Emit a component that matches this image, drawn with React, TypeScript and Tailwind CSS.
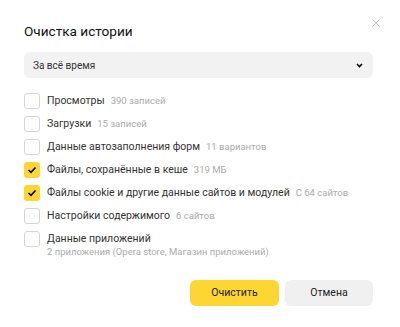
import { useState } from "react"

interface Item {
  label: string
  hint: string
  checked: boolean
  below?: boolean
}

const initialItems: Item[] = [
  { label: "Просмотры", hint: "390 записей", checked: false },
  { label: "Загрузки", hint: "15 записей", checked: false },
  { label: "Данные автозаполнения форм", hint: "11 вариантов", checked: false },
  { label: "Файлы, сохранённые в кеше", hint: "319 МБ", checked: true },
  { label: "Файлы cookie и другие данные сайтов и модулей", hint: "С 64 сайтов", checked: true },
  { label: "Настройки содержимого", hint: "6 сайтов", checked: false },
  { label: "Данные приложений", hint: "2 приложения (Opera store, Магазин приложений)", checked: false, below: true },
]

function Checkbox({ checked }: { checked: boolean }) {
  if (checked) {
    return (
      <span className="w-4 h-4 rounded-[3px] bg-[#fdd633] flex items-center justify-center flex-shrink-0">
        <svg width="10" height="8" viewBox="0 0 10 8" fill="none">
          <path d="M1.5 4 L4 6.3 L8.5 1.5" stroke="#000" strokeWidth="1.6" />
        </svg>
      </span>
    )
  }
  return <span className="w-4 h-4 rounded-[3px] border border-[#d6d6d6] bg-white flex-shrink-0" />
}

export default function App() {
  const [items, setItems] = useState(initialItems)

  const toggle = (i: number) =>
    setItems(items.map((it, j) => (j === i ? { ...it, checked: !it.checked } : it)))

  return (
    <div className="relative w-[400px] h-[327px] bg-white pl-6 pr-[27px] pt-[21px] font-['Roboto',sans-serif] text-black">
      <button className="absolute top-[19px] right-[20px] w-[8px] h-[8px]">
        <svg width="8" height="8" viewBox="0 0 8 8" className="block">
          <path d="M0.5 0.5 L7.5 7.5 M7.5 0.5 L0.5 7.5" stroke="#c4c4c4" strokeWidth="1" />
        </svg>
      </button>

      <h3 className="text-[13.6px] leading-5 text-[#111]">Очистка истории</h3>

      <div className="mt-[11px] h-[26px] rounded-md bg-[#f2f2f2] flex items-center justify-between pl-[9px] pr-[10px]">
        <span className="text-[10px] text-[#333]">За всё время</span>
        <svg width="7" height="5" viewBox="0 0 7 5">
          <path d="M1 1 L3.5 3.5 L6 1" stroke="#000" strokeWidth="1.6" fill="none" />
        </svg>
      </div>

      <div className="mt-[15px] flex flex-col gap-[7px]">
        {items.map((it, i) => (
          <label key={it.label} className="flex items-start gap-[7px] cursor-pointer" onClick={() => toggle(i)}>
            <Checkbox checked={it.checked} />
            {it.below ? (
              <div className="pt-px">
                <div className="h-[14px] text-[10.5px] leading-[14px] text-[#333]">{it.label}</div>
                <div className="h-[12px] text-[9.5px] leading-[12px] text-[#aaa]">{it.hint}</div>
              </div>
            ) : (
              <div className="h-4 flex items-center gap-[6px] whitespace-nowrap">
                <span className="text-[10.5px] leading-4 text-[#333]">{it.label}</span>
                <span className="text-[9.5px] leading-4 text-[#aaa]">{it.hint}</span>
              </div>
            )}
          </label>
        ))}
      </div>

      <div className="mt-[22px] flex justify-end gap-[6px]">
        <button className="w-[89px] h-[26px] rounded-md bg-[#fdd633] text-[10.5px] text-[#222]">Очистить</button>
        <button className="w-[88px] h-[26px] rounded-md bg-[#f0f0f0] text-[10.5px] text-[#222]">Отмена</button>
      </div>
    </div>
  )
}
